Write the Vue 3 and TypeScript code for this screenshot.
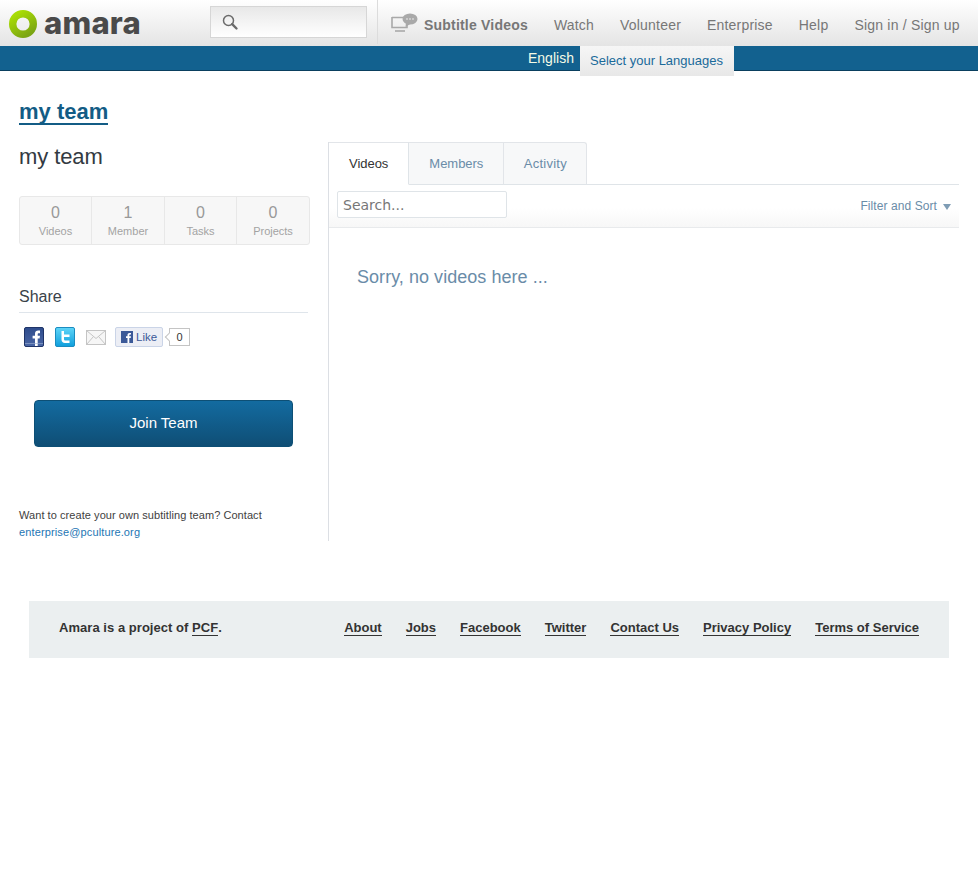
<script setup lang="ts">
const navLinks: string[] = ['Watch', 'Volunteer', 'Enterprise', 'Help', 'Sign in / Sign up']
const stats = [
  { n: 0, label: 'Videos' },
  { n: 1, label: 'Member' },
  { n: 0, label: 'Tasks' },
  { n: 0, label: 'Projects' },
]
const tabs: string[] = ['Videos', 'Members', 'Activity']
const footerLinks: string[] = ['About', 'Jobs', 'Facebook', 'Twitter', 'Contact Us', 'Privacy Policy', 'Terms of Service']
</script>

<template>
  <div class="page">
    <header class="header">
      <div class="logo">
        <svg class="logo-ring" width="28" height="28" viewBox="0 0 28 28">
          <defs>
            <linearGradient id="ring" x1="0.2" y1="0" x2="0.8" y2="1">
              <stop offset="0" stop-color="#a8dc05" />
              <stop offset="1" stop-color="#7ba513" />
            </linearGradient>
          </defs>
          <circle cx="14" cy="14" r="10.3" fill="none" stroke="url(#ring)" stroke-width="7.4" />
        </svg>
        <span class="logo-text">amara</span>
      </div>
      <div class="search">
        <svg width="18" height="18" viewBox="0 0 18 18">
          <circle cx="7.5" cy="7.5" r="5" fill="none" stroke="#6b6b6b" stroke-width="1.5" />
          <path d="M11.2 11.2 L15.5 15.5" stroke="#6b6b6b" stroke-width="2.4" stroke-linecap="round" />
        </svg>
      </div>
      <nav class="nav">
        <a class="nav-main">
          <svg width="28" height="20" viewBox="0 0 28 20">
            <path d="M1 4.5 H14 M1 4 V14.5 H16 V12" fill="none" stroke="#a9a9a9" stroke-width="1.6" />
            <path d="M4 18 H14" stroke="#a9a9a9" stroke-width="1.6" />
            <ellipse cx="19" cy="6" rx="7.5" ry="5.6" fill="#a9a9a9" />
            <path d="M15 9 L14.5 14 L20 10.5 Z" fill="#a9a9a9" />
            <circle cx="16" cy="6" r="0.8" fill="#f2f2f2" />
            <circle cx="19" cy="6" r="0.8" fill="#f2f2f2" />
            <circle cx="22" cy="6" r="0.8" fill="#f2f2f2" />
          </svg>
          <span>Subtitle Videos</span>
        </a>
        <a v-for="l in navLinks" :key="l" class="nav-link">{{ l }}</a>
      </nav>
    </header>

    <div class="langbar">
      <span class="lang">English</span>
      <span class="lang-select">Select your Languages</span>
    </div>

    <h1 class="title"><a>my team</a></h1>

    <div class="columns">
      <aside class="side">
        <h2 class="team-name">my team</h2>
        <ul class="stats">
          <li v-for="s in stats" :key="s.label" class="stat">
            <span class="stat-n">{{ s.n }}</span>
            <span class="stat-l">{{ s.label }}</span>
          </li>
        </ul>

        <h3 class="share">Share</h3>
        <div class="share-row">
          <svg class="ico" width="20" height="20" viewBox="0 0 20 20">
            <defs>
              <linearGradient id="fb" x1="0" y1="0" x2="0" y2="1">
                <stop offset="0" stop-color="#2e4c8c" />
                <stop offset="1" stop-color="#4a66a5" />
              </linearGradient>
            </defs>
            <rect x="0.5" y="0.5" width="19" height="19" rx="1.5" fill="url(#fb)" stroke="#1f3468" />
            <path d="M11 19 V11.5 H8.6 V8.8 H11 V6.8 C11 4.6 12.3 3.5 14.2 3.5 H16 V6.2 H14.8 C13.9 6.2 13.7 6.6 13.7 7.3 V8.8 H16 L15.6 11.5 H13.7 V19 Z" fill="#fff" />
            <rect x="1" y="16" width="18" height="1" fill="#9fb0d2" opacity="0.6" />
          </svg>
          <svg class="ico tw" width="20" height="20" viewBox="0 0 20 20">
            <defs>
              <linearGradient id="tw" x1="0" y1="0" x2="0" y2="1">
                <stop offset="0" stop-color="#5fd5f8" />
                <stop offset="1" stop-color="#0f9edc" />
              </linearGradient>
            </defs>
            <rect x="0.5" y="0.5" width="19" height="19" rx="1.5" fill="url(#tw)" stroke="#1b8cc0" />
            <path d="M6.5 4 H9 V7.5 H14.5 V10 H9 V12 C9 13 9.6 13.5 10.6 13.5 H14.5 V16 H10 C7.8 16 6.5 14.6 6.5 12.5 Z" fill="#fff" />
          </svg>
          <svg class="ico mail" width="20" height="16" viewBox="0 0 20 16">
            <rect x="0.5" y="0.5" width="19" height="14" fill="#f6f6f6" stroke="#c4c4c4" />
            <path d="M0.5 0.5 L10 8.5 L19.5 0.5 M0.5 14.5 L7.5 6.5 M19.5 14.5 L12.5 6.5" fill="none" stroke="#c4c4c4" />
          </svg>
          <span class="like">
            <svg width="12" height="12" viewBox="0 0 12 12">
              <rect width="12" height="12" fill="#3b5998" />
              <path d="M6.5 12 V7 H5 V5.2 H6.5 V4 C6.5 2.6 7.3 1.9 8.6 1.9 H10 V3.6 H9.1 C8.5 3.6 8.3 3.9 8.3 4.4 V5.2 H10 L9.7 7 H8.3 V12 Z" fill="#fff" />
            </svg>
            <span>Like</span>
          </span>
          <span class="like-count">0</span>
        </div>

        <button class="join" type="button">Join Team</button>

        <p class="contact">
          Want to create your own subtitling team? Contact
          <a>enterprise@pculture.org</a>
        </p>
      </aside>

      <main class="main">
        <ul class="tabs">
          <li v-for="(t, i) in tabs" :key="t" class="tab" :class="{ active: i === 0 }">{{ t }}</li>
        </ul>
        <div class="tools">
          <input class="tool-search" type="text" placeholder="Search..." />
          <span class="filter">Filter and Sort<i class="caret"></i></span>
        </div>
        <p class="empty">Sorry, no videos here ...</p>
      </main>
    </div>

    <footer class="footer">
      <span class="foot-left">Amara is a project of <a>PCF</a>.</span>
      <span class="foot-links">
        <a v-for="l in footerLinks" :key="l">{{ l }}</a>
      </span>
    </footer>
  </div>
</template>

<style>
html, body { margin: 0; background: #fff; }
</style>

<style scoped>
.page { font-family: "Liberation Sans", Arial, sans-serif; height: 879px; overflow: hidden; color: #333; }
.header { height: 46px; display: flex; background: linear-gradient(#ffffff, #e4e4e4); box-sizing: border-box; }
.logo { width: 210px; display: flex; align-items: flex-start; flex: none; padding: 10px 0 0 9px; box-sizing: border-box; }
.logo-ring { flex: none; margin-right: 7px; }
.logo-text { font-family: Inter, "DejaVu Sans", sans-serif; font-weight: 800; font-size: 31px; line-height: 26px; letter-spacing: 0.2px; color: #4a4a4a; margin-top: 0; }
.search { width: 157px; height: 32px; margin-top: 6px; flex: none; box-sizing: border-box; border: 1px solid #d6d6d6; background: linear-gradient(#e8e8e8, #fff); padding: 6px 0 0 10px; }
.search svg { display: block; }
.nav { margin-left: 10px; height: 44px; border-left: 1px solid #dcdcdc; display: flex; align-items: center; padding-left: 13px; flex: 1; min-width: 0; font-size: 14px; color: #777; letter-spacing: 0.2px; white-space: nowrap; }
.nav-main { display: flex; align-items: center; flex: none; font-weight: 700; margin-right: 26px; margin-top: 6px; letter-spacing: 0.2px; }
.nav-main svg { margin-right: 5px; margin-top: -4px; }
.nav-link { margin-right: 26px; flex: none; margin-top: 6px; }
.langbar { height: 25px; background: #12618f; border-bottom: 1px solid #0a3f5e; display: flex; justify-content: flex-start; padding-left: 528px; box-sizing: border-box; font-size: 14px; position: relative; }
.lang { color: #f4fbe6; line-height: 24px; }
.lang-select { position: absolute; left: 580px; top: 0; width: 154px; height: 30px; box-sizing: border-box; background: linear-gradient(#f6f6f6, #e8e8e8); color: #1a6a9a; font-size: 13px; line-height: 30px; text-align: center; padding-right: 1px; }
.title { margin: 29px 0 0 19px; font-size: 22px; line-height: 24px; font-weight: 700; color: #135c85; }
.title a { border-bottom: 2px solid #135c85; display: inline-block; line-height: 22px; padding-bottom: 0; }
.columns { display: flex; margin-top: 17px; }
.side { width: 291px; margin-left: 19px; flex: none; }
.team-name { margin: 2px 0 0; font-size: 22px; font-weight: 400; line-height: 25px; color: #333a42; letter-spacing: -0.1px; }
.stats { list-style: none; margin: 27px 0 0; padding: 0; display: grid; grid-template-columns: 71px 73px 72px 1fr; height: 49px; box-sizing: border-box; border: 1px solid #e8e8e8; border-radius: 3px; background: #f7f7f7; }
.stat { display: flex; flex-direction: column; align-items: center; border-left: 1px solid #e8e8e8; box-sizing: border-box; }
.stat:first-child { border-left: 0; }
.stat-n { font-size: 16px; line-height: 18px; color: #999; margin-top: 7px; }
.stat-l { font-size: 11px; line-height: 14px; color: #a3a3a3; margin-top: 2px; }
.share { margin: 42px 0 0; width: 289px; font-size: 16px; font-weight: 400; line-height: 19px; color: #3a424a; padding-bottom: 6px; border-bottom: 1px solid #dfe5eb; }
.share-row { display: flex; align-items: center; height: 20px; margin: 14px 0 0 5px; }
.ico { display: block; flex: none; }
.tw { margin-left: 11px; }
.mail { margin-left: 11px; margin-top: 2px; }
.like { margin-left: 9px; width: 48px; height: 20px; box-sizing: border-box; border: 1px solid #cad4e7; border-radius: 2px; background: #eceef5; display: flex; align-items: center; padding-left: 5px; font-size: 11.5px; color: #3b5998; }
.like span { margin-left: 3px; }
.like-count { margin-left: 6px; width: 21px; height: 18px; box-sizing: border-box; border: 1px solid #c4c4c4; font-size: 11px; line-height: 16px; text-align: center; color: #333; background: #fff; position: relative; }
.like-count::before { content: ""; position: absolute; left: -4px; top: 5px; width: 5px; height: 5px; transform: rotate(45deg); background: #fff; border-left: 1px solid #c4c4c4; border-bottom: 1px solid #c4c4c4; }
.join { display: block; margin: 53px 0 0 15px; width: 259px; height: 47px; border: 1px solid #0d4f75; border-radius: 4px; background: linear-gradient(#136ba0, #0f4e75); color: #fff; font-family: inherit; font-size: 15px; padding: 0 0 2px; }
.contact { margin: 60px 0 0; font-size: 11px; line-height: 17px; color: #3e3e3e; letter-spacing: 0.06px; }
.contact a { display: block; color: #1e76b4; letter-spacing: 0.13px; }
.main { margin-left: 18px; width: 631px; height: 399px; box-sizing: border-box; border-left: 1px solid #dcdfe4; flex: none; }
.tabs { list-style: none; margin: 0; padding: 0; height: 43px; display: flex; box-sizing: border-box; border-bottom: 1px solid #dfe4e8; }
.tab { box-sizing: border-box; height: 43px; padding: 0 20px; border: 1px solid #e2e5e9; border-left: 0; border-bottom: 1px solid #dfe4e8; background: #f7f8f9; font-size: 13px; line-height: 42px; color: #6a8ca8; letter-spacing: -0.03px; }
.tab:last-child { border-top-right-radius: 3px; letter-spacing: 0.25px; padding: 0 19.5px; }
.tab.active { background: #fff; color: #333; border-bottom-color: #fff; height: 43px; padding: 0 20px; border-right-color: #dfe4e8; }
.tools { height: 43px; display: flex; justify-content: space-between; box-sizing: border-box; padding: 6px 7px 0 8px; border-bottom: 1px solid #e8eaec; background: linear-gradient(#fff 55%, #f7f7f7); }
.tool-search { width: 170px; height: 27px; box-sizing: border-box; border: 1px solid #dfe4e8; border-radius: 2px; background: #fff; padding: 0 5px; font-family: "DejaVu Sans", sans-serif; font-size: 14px; color: #777; outline: none; }
.tool-search::placeholder { color: #777; opacity: 1; }
.filter { font-size: 12px; line-height: 29px; color: #6a8ca8; display: flex; align-items: center; height: 29px; margin-top: 1px; letter-spacing: 0.08px; padding-right: 1px; }
.caret { width: 0; height: 0; border-left: 4px solid transparent; border-right: 4px solid transparent; border-top: 6px solid #7f9db5; margin-left: 6px; margin-top: 1px; }
.empty { margin: 38px 0 0 28px; font-size: 18px; line-height: 22px; color: #6a8ca8; letter-spacing: 0.04px; }
.footer { margin: 60px 29px 0; height: 57px; box-sizing: border-box; background: #ebeff0; padding: 0 30px 3px; display: flex; justify-content: space-between; align-items: center; font-size: 13px; font-weight: 700; color: #333; }
.foot-left { letter-spacing: 0.04px; }
.footer a { text-decoration: none; border-bottom: 1px solid #333; display: inline-block; line-height: 14px; }
.foot-links { display: flex; gap: 24px; }
</style>
